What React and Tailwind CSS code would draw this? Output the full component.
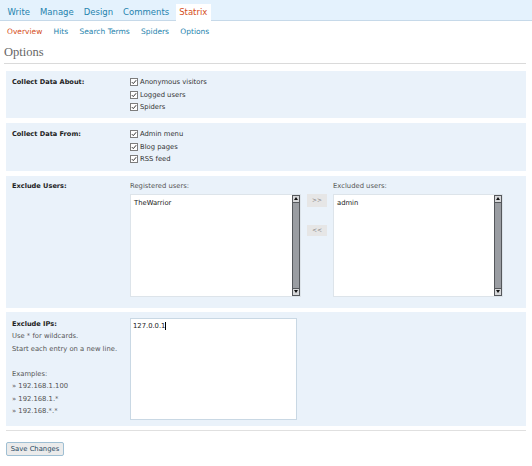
import {useState} from 'react';

const tabs = ['Write', 'Manage', 'Design', 'Comments'];
const subnav = ['Overview', 'Hits', 'Search Terms', 'Spiders', 'Options'];

function Check({label}) {
    return (
        <div className="flex items-center h-[12.5px]">
            <svg width="8" height="8" viewBox="0 0 8 8" className="mr-[2px] shrink-0">
                <rect x="0.5" y="0.5" width="7" height="7" fill="#fff" stroke="#7d7d7d" strokeWidth="1"/>
                <path d="M1.8 4.1 L3.3 5.6 L6.2 2.2" fill="none" stroke="#333" strokeWidth="1"/>
            </svg>
            <span>{label}</span>
        </div>
    );
}

function ScrollBtn({down}) {
    return (
        <div className="h-[8px] bg-[#d6d7d9] border-[#55585c] border flex items-center justify-center shrink-0">
            <svg width="4" height="3" viewBox="0 0 4 3">
                <path d={down ? 'M0 0 L4 0 L2 3 Z' : 'M0 3 L4 3 L2 0 Z'} fill="#111"/>
            </svg>
        </div>
    );
}

function ListBox({items, width}) {
    return (
        <div className={`flex bg-white border border-[#dde4ea] h-[103px] ${width}`}>
            <div className="flex-1 px-[3px] pt-[2px] leading-[12px] text-[#222]">
                {items.map(i => <div key={i}>{i}</div>)}
            </div>
            <div className="w-[8px] flex flex-col">
                <ScrollBtn/>
                <div className="flex-1 bg-[#9a9da2] border-x border-[#55585c]"/>
                <ScrollBtn down/>
            </div>
        </div>
    );
}

function Section({label, children, className = ''}) {
    return (
        <div className={`flex bg-[#eaf2fa] pl-[6px] ${className}`}>
            <div className="w-[118px] shrink-0">
                <div className="font-bold text-[6.6px] leading-[12.5px] text-[#222]">{label}</div>
            </div>
            <div className="flex-1">{children}</div>
        </div>
    );
}

export default function App() {
    const [current] = useState('Overview');

    return (
        <div className="w-[532px] h-[466px] bg-white font-['DejaVu_Sans',sans-serif] text-[6.8px] text-[#333]">
            {/* Top tabs */}
            <div className="h-[21px] bg-[#e4f2fd] border-b border-[#c6d9e9] flex items-end pl-[4px] gap-[3px]">
                {tabs.map(t => (
                    <div key={t} className="h-[16px] px-[3.5px] flex items-center text-[8.5px] text-[#2583ad]">{t}</div>
                ))}
                <div className="h-[16px] px-[3.5px] flex items-center text-[8.5px] text-[#d54e21] bg-white mb-[-1px] h-[17px]">Statrix</div>
            </div>

            {/* Sub nav */}
            <div className="h-[22px] flex items-center pl-[7px] gap-[11.3px] text-[7.5px]">
                {subnav.map(s => (
                    <span key={s} className={s === current ? 'text-[#d54e21]' : 'text-[#2583ad]'}>{s}</span>
                ))}
            </div>

            {/* Heading */}
            <div className="ml-[4px] mr-[6px] border-b border-[#dadada] pb-[2px]">
                <h2 className="font-['Liberation_Serif',serif] text-[12.5px] leading-[18px] text-[#666]">Options</h2>
            </div>

            <div className="mx-[6px] mt-[7px] flex flex-col">
                <Section label="Collect Data About:" className="pt-[5px] pb-[4.5px]">
                    <Check label="Anonymous visitors"/>
                    <Check label="Logged users"/>
                    <Check label="Spiders"/>
                </Section>

                <Section label="Collect Data From:" className="pt-[5px] pb-[5px] mt-[5px]">
                    <Check label="Admin menu"/>
                    <Check label="Blog pages"/>
                    <Check label="RSS feed"/>
                </Section>

                <Section label="Exclude Users:" className="pt-[4px] pb-[11px] mt-[5px]">
                    <div className="flex">
                        <div>
                            <div className="h-[14px] leading-[12px] text-[#555]">Registered users:</div>
                            <ListBox items={['TheWarrior']} width="w-[171px]"/>
                        </div>
                        <div className="flex flex-col pt-[14px] ml-[6px] mr-[6px]">
                            <button className="w-[20px] h-[13px] bg-[#e6e6e6] text-[6px] text-[#777] leading-none">&gt;&gt;</button>
                            <button className="w-[20px] h-[11px] bg-[#e6e6e6] text-[6px] text-[#777] leading-none mt-[18px]">&lt;&lt;</button>
                        </div>
                        <div>
                            <div className="h-[14px] leading-[12px] text-[#555]">Excluded users:</div>
                            <ListBox items={['admin']} width="w-[170px]"/>
                        </div>
                    </div>
                </Section>

                <div className="flex bg-[#eaf2fa] pl-[6px] pt-[6px] pb-[5.5px] mt-[4px]">
                    <div className="w-[118px] shrink-0 leading-[12.5px] text-[#555]">
                        <div className="font-bold text-[6.6px] text-[#222]">Exclude IPs:</div>
                        <div>Use * for wildcards.</div>
                        <div>Start each entry on a new line.</div>
                        <div>&nbsp;</div>
                        <div>Examples:</div>
                        <div>» 192.168.1.100</div>
                        <div>» 192.168.1.*</div>
                        <div>» 192.168.*.*</div>
                    </div>
                    <div className="w-[167px] h-[102.5px] bg-white border border-[#c9d8e4] px-[2px] pt-[1px] leading-[12px] text-[#222]">
                        127.0.0.1<span className="inline-block w-[1px] h-[8px] bg-black align-middle"/>
                    </div>
                </div>

                <div className="mt-[4px] h-[1.5px] bg-[#e0e0e0]"/>

                <button className="mt-[11px] w-[58px] h-[14px] bg-[#ebebeb] border border-[#9fbfd3] rounded-[2px] text-[6.8px] text-[#264761] leading-none">
                    Save Changes
                </button>
            </div>
        </div>
    );
}
